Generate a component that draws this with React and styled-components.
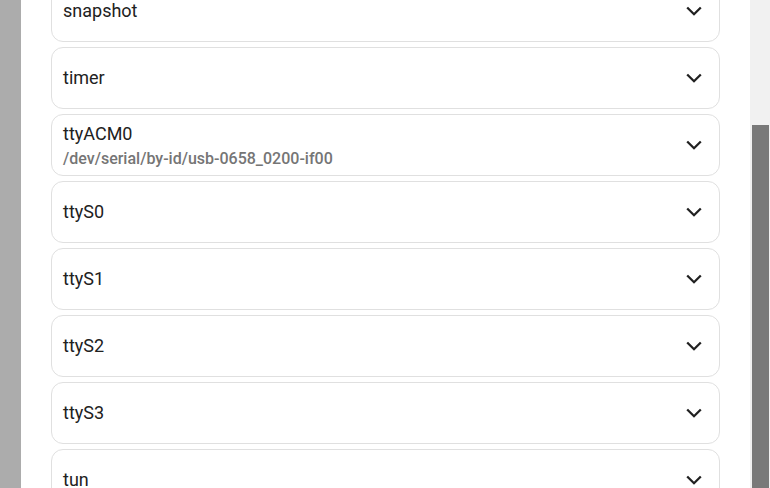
import React from 'react';
import styled, { createGlobalStyle } from 'styled-components';

const GlobalStyle = createGlobalStyle`
  html, body {
    margin: 0;
    padding: 0;
    overflow: hidden;
    background: #acacac;
  }
  * {
    box-sizing: border-box;
  }
`;

// Whole window: backdrop strip, dialog body and the page scrollbar
const Screen = styled.div`
  display: flex;
  flex-direction: row;
  width: 770px;
  height: 488px;
  overflow: hidden;
  font-family: Roboto, 'Noto Sans', sans-serif;
`;

const Backdrop = styled.div`
  width: 21px;
  flex-shrink: 0;
  background: #acacac;
`;

const Dialog = styled.div`
  flex: 1;
  background: #ffffff;
  padding: 0 30px;
  overflow: hidden;
`;

// List is scrolled a bit, first card is partly above the window
const PanelList = styled.div`
  display: flex;
  flex-direction: column;
  gap: 5px;
  margin-top: -20px;
`;

const Panel = styled.div`
  display: flex;
  flex-direction: row;
  align-items: center;
  justify-content: space-between;
  min-height: 62px;
  padding: 0 17px 0 11px;
  border: 1px solid #e0e0e0;
  border-radius: 12px;
  background: #ffffff;
`;

const PanelText = styled.div`
  display: flex;
  flex-direction: column;
`;

const PanelTitle = styled.span`
  font-size: 18px;
  line-height: 24px;
  color: #212121;
`;

const PanelSub = styled.span`
  font-size: 16px;
  line-height: 20px;
  font-weight: 500;
  color: #757575;
  margin-top: 3px;
`;

const Chevron = styled.svg`
  width: 16px;
  height: 10px;
  flex-shrink: 0;
  margin-top: -1px;
`;

// Fake page scrollbar
const ScrollTrack = styled.div`
  width: 20px;
  flex-shrink: 0;
  background: #f1f1f1;
  display: flex;
  flex-direction: column;
  padding: 125px 1px 0 2px;
`;

const ScrollThumb = styled.div`
  flex: 1;
  background: #797979;
`;

const devices = [
  { name: 'snapshot' },
  { name: 'timer' },
  { name: 'ttyACM0', path: '/dev/serial/by-id/usb-0658_0200-if00' },
  { name: 'ttyS0' },
  { name: 'ttyS1' },
  { name: 'ttyS2' },
  { name: 'ttyS3' },
  { name: 'tun' },
];

const ExpandIcon = () => (
  <Chevron viewBox="0 0 16 10">
    <polyline
      points="1.2,1.5 8,8.2 14.8,1.5"
      fill="none"
      stroke="#212121"
      strokeWidth="2.3"
    />
  </Chevron>
);

const App = () => (
  <>
    <GlobalStyle />
    <Screen>
      <Backdrop />
      <Dialog>
        <PanelList>
          {devices.map((d) => (
            <Panel key={d.name}>
              <PanelText>
                <PanelTitle>{d.name}</PanelTitle>
                {d.path && <PanelSub>{d.path}</PanelSub>}
              </PanelText>
              <ExpandIcon />
            </Panel>
          ))}
        </PanelList>
      </Dialog>
      <ScrollTrack>
        <ScrollThumb />
      </ScrollTrack>
    </Screen>
  </>
);

export default App;
